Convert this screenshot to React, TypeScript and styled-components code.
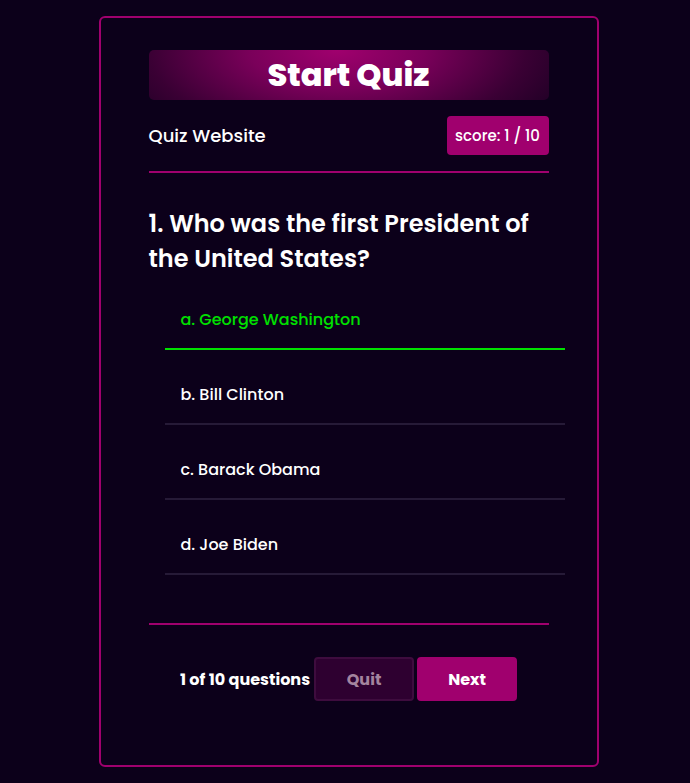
import React from "react";
import styled, { createGlobalStyle } from "styled-components";

const Global = createGlobalStyle`
  html, body { margin: 0; padding: 0; background: #0c001a; }
  body { font-family: "Poppins", "Inter", "Noto Sans", sans-serif; color: #fff; }
  * { box-sizing: border-box; }
`;

const Page = styled.div`
  display: flex;
  justify-content: center;
  padding: 16px 0 16px 7px;
`;

const Card = styled.div`
  width: 500px;
  border: 2px solid #a0006e;
  border-radius: 6px;
  padding: 32px 48px 64px;
`;

const Banner = styled.h1`
  margin: 0;
  height: 50px;
  border-radius: 5px;
  background: radial-gradient(ellipse 290px 130px at 47% 0%, #a0006e 0%, #7a005a 30%, #3a0034 65%, #0c001a 100%);
  font-size: 32px;
  font-weight: 800;
  line-height: 50px;
  text-align: center;
`;

const Row = styled.div`
  display: flex;
  justify-content: space-between;
  align-items: center;
  margin-top: 16px;
  padding-bottom: 16px;
  border-bottom: 2px solid #a0006e;
`;

const SiteName = styled.div`
  font-size: 18px;
  font-weight: 500;
`;

const Score = styled.div`
  height: 39px;
  width: 102px;
  display: flex;
  align-items: center;
  justify-content: center;
  background: #a0006e;
  border-radius: 4px;
  font-size: 15px;
  font-weight: 500;
`;

const Question = styled.h2`
  margin: 33px 0 0;
  font-size: 24px;
  font-weight: 600;
  line-height: 35px;
`;

const Options = styled.ul`
  list-style: none;
  margin: -1px 0 0 16px;
  padding: 0;
  width: 400px;
`;

const Option = styled.li<{ $correct?: boolean }>`
  height: 75px;
  padding: 33px 16px 0;
  font-size: 16px;
  line-height: 24px;
  font-weight: 500;
  color: ${(p) => (p.$correct ? "#00e000" : "#ffffff")};
  border-bottom: 2px solid ${(p) => (p.$correct ? "#00e000" : "#261a37")};
`;

const Divider = styled.div`
  margin-top: 48px;
  height: 2px;
  background: #a0006e;
`;

const Footer = styled.div`
  display: flex;
  justify-content: center;
  align-items: center;
  margin-top: 32px;
`;

const Count = styled.span`
  font-size: 16px;
  font-weight: 700;
  margin-right: 4px;
`;

const Button = styled.button<{ $primary?: boolean }>`
  width: 100px;
  height: 44px;
  margin-left: ${(p) => (p.$primary ? "3px" : "0")};
  border-radius: 4px;
  font-family: inherit;
  font-size: 16px;
  font-weight: 700;
  cursor: pointer;
  background: ${(p) => (p.$primary ? "#a0006e" : "#2e0030")};
  color: ${(p) => (p.$primary ? "#ffffff" : "#a4849e")};
  border: 2px solid ${(p) => (p.$primary ? "#a0006e" : "#3e0c3e")};
`;

const answers = [
  { text: "a. George Washington", correct: true },
  { text: "b. Bill Clinton" },
  { text: "c. Barack Obama" },
  { text: "d. Joe Biden" },
];

export default function App() {
  return (
    <>
      <Global />
      <Page>
        <Card>
          <Banner>Start Quiz</Banner>
          <Row>
            <SiteName>Quiz Website</SiteName>
            <Score>score: 1 / 10</Score>
          </Row>
          <Question>1. Who was the first President of the United States?</Question>
          <Options>
            {answers.map((a) => (
              <Option key={a.text} $correct={a.correct}>
                {a.text}
              </Option>
            ))}
          </Options>
          <Divider />
          <Footer>
            <Count>1 of 10 questions</Count>
            <Button>Quit</Button>
            <Button $primary>Next</Button>
          </Footer>
        </Card>
      </Page>
    </>
  );
}
